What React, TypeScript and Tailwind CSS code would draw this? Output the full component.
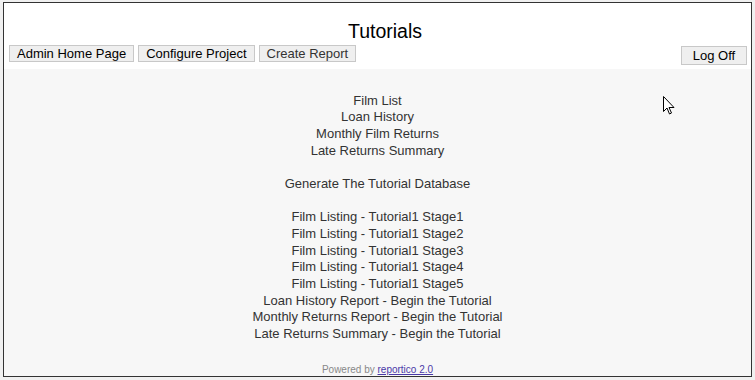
import React from "react";

const topLinks = ["Film List", "Loan History", "Monthly Film Returns", "Late Returns Summary"];
const tutLinks = [
  "Film Listing - Tutorial1 Stage1",
  "Film Listing - Tutorial1 Stage2",
  "Film Listing - Tutorial1 Stage3",
  "Film Listing - Tutorial1 Stage4",
  "Film Listing - Tutorial1 Stage5",
  "Loan History Report - Begin the Tutorial",
  "Monthly Returns Report - Begin the Tutorial",
  "Late Returns Summary - Begin the Tutorial",
];

export default function App() {
  return (
    <div
      className="w-[755px] h-[380px] bg-[#f0f0f0] pt-[2px] pl-[3px] relative overflow-hidden"
      style={{ fontFamily: '"Liberation Sans", Arial, sans-serif' }}
    >
      <div className="w-[749px] h-[375px] border border-[#333333] flex flex-col bg-[#f7f7f7]">
        <div className="bg-white pt-[17px] pb-[4px]">
          <div className="h-[22px] leading-[22px] text-[19.5px] text-black text-center pl-[15px]">Tutorials</div>
          <div className="mt-[3px] pl-[5px] pr-[4px] flex justify-between items-start">
            <div className="flex gap-[4px]">
              <div className="h-[17px] leading-[15px] text-[13px] text-black bg-[#efefef] border border-[#c8c8c8] px-[7px]">Admin Home Page</div>
              <div className="h-[17px] leading-[15px] text-[13px] text-black bg-[#efefef] border border-[#c8c8c8] px-[7px]">Configure Project</div>
              <div className="h-[17px] leading-[15px] text-[13px] text-[#333333] bg-[#efefef] border border-[#c8c8c8] px-[7px]">Create Report</div>
            </div>
            <div className="mt-[1px] h-[19px] leading-[17px] text-[13px] text-black bg-[#efefef] border border-[#c8c8c8] w-[66px] text-center">Log Off</div>
          </div>
        </div>
        <div className="flex-1 flex flex-col items-center pt-[23.7px] text-[13px] leading-[16.67px] text-[#333333]">
          {topLinks.map((t) => (
            <div key={t}>{t}</div>
          ))}
          <div className="h-[16.67px]" />
          <div>Generate The Tutorial Database</div>
          <div className="h-[16.67px]" />
          {tutLinks.map((t) => (
            <div key={t}>{t}</div>
          ))}
          <div className="mt-auto text-[10px] leading-[12px] text-[#888888]">
            Powered by <span className="text-[#4b3aa8] underline">reportico 2.0</span>
          </div>
        </div>
      </div>
      <svg className="absolute left-[663px] top-[96px]" width="13" height="20" viewBox="0 0 13 20">
        <path d="M0.5 0.5 L0.5 15.5 L4 12 L6.5 18 L8.5 17 L6 11.5 L11 11.5 Z" fill="white" stroke="black" strokeWidth="1" />
      </svg>
    </div>
  );
}
